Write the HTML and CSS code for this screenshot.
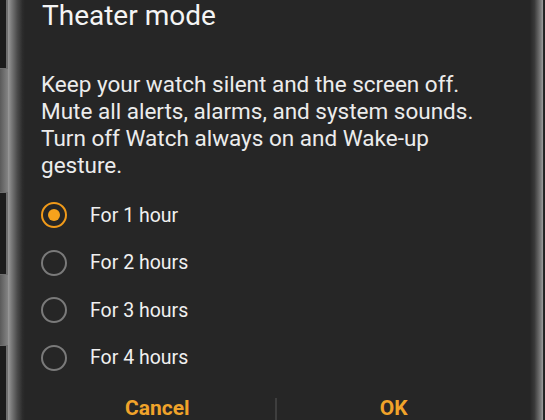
FILE: index.html
```html
<!DOCTYPE html>
<html lang="en">
<head>
<meta charset="utf-8">
<title>Theater mode</title>
<link rel="stylesheet" href="styles.css">
</head>
<body>
<div class="phone">
  <div class="side">
    <div class="seg dark s1"></div>
    <div class="seg grey s2"></div>
    <div class="seg dark s3"></div>
    <div class="seg grey s4"></div>
    <div class="seg dark s5"></div>
  </div>
  <div class="bezel-left"></div>
  <div class="screen">
    <h1 class="title">Theater mode</h1>
    <p class="desc">Keep your watch silent and the screen off.<br>Mute all alerts, alarms, and system sounds.<br>Turn off Watch always on and Wake-up gesture.</p>
    <ul class="options">
      <li class="option selected"><span class="radio"><span class="dot"></span></span><span class="label">For 1 hour</span></li>
      <li class="option"><span class="radio"></span><span class="label">For 2 hours</span></li>
      <li class="option"><span class="radio"></span><span class="label">For 3 hours</span></li>
      <li class="option"><span class="radio"></span><span class="label">For 4 hours</span></li>
    </ul>
    <div class="actions">
      <button class="btn">Cancel</button>
      <span class="divider"></span>
      <button class="btn">OK</button>
    </div>
  </div>
  <div class="bezel-right"></div>
</div>
</body>
</html>
```

FILE: styles.css
```css
html, body {
  margin: 0;
  padding: 0;
  background: #262626;
  overflow: hidden;
}
body {
  width: 545px;
  height: 420px;
  font-family: Roboto, "Noto Sans", Arial, sans-serif;
}
.phone {
  display: flex;
  width: 545px;
  height: 420px;
  overflow: hidden;
}
.side {
  width: 8px;
  display: flex;
  flex-direction: column;
  flex-shrink: 0;
}
.seg { box-sizing: border-box; }
.seg.dark {
  background: #1c1c1c;
  border-right: 2px solid #6e6e6e;
  border-top: 1px solid #6e6e6e;
  border-bottom: 1px solid #6e6e6e;
}
.seg.grey {
  background: linear-gradient(to right, #5a5a5a, #848484);
}
.s1 { height: 69px; border-top: none !important; }
.s2 { height: 123px; }
.s3 { height: 83px; }
.s4 { height: 70px; }
.s5 { flex: 1; border-bottom: none !important; }
.bezel-left {
  width: 17px;
  flex-shrink: 0;
  background: linear-gradient(to right, #9a9a9a 0%, #7a7a7a 20%, #4a4a4a 55%, #2c2c2c 85%, #262626 100%);
}
.bezel-right {
  width: 15px;
  flex-shrink: 0;
  background: linear-gradient(to right, #262626 0%, #3a3a3a 30%, #7a7a7a 70%, #9c9c9c 86%, #2a2a2a 88%, #1e1e1e 100%);
}
.screen {
  flex: 1;
  background: #262626;
  padding: 0 12px 0 16px;
  display: flex;
  flex-direction: column;
  color: #f0f0f0;
}
.title {
  margin: -0.5px 0 0 0;
  font-size: 28px;
  font-weight: 400;
  line-height: 32px;
  color: #f4f4f4;
  padding-left: 1px;
}
.desc {
  margin: 39.5px 0 0 0;
  max-width: 445px;
  font-size: 22.5px;
  line-height: 27px;
  color: #ececec;
}
.options {
  list-style: none;
  margin: 12.5px 0 0 0;
  padding: 0;
}
.option {
  height: 47.5px;
  display: flex;
  align-items: center;
  gap: 23px;
}
.radio {
  width: 26px;
  height: 26px;
  box-sizing: border-box;
  border: 2px solid #7a7a7a;
  border-radius: 50%;
  display: flex;
  align-items: center;
  justify-content: center;
  flex-shrink: 0;
}
.option.selected .radio {
  border-color: #f09a1a;
}
.dot {
  width: 12px;
  height: 12px;
  border-radius: 50%;
  background: #f7a21c;
}
.label {
  font-size: 19.5px;
  color: #f0f0f0;
}
.actions {
  margin: 14.5px 7px 0 -1px;
  display: flex;
  align-items: flex-start;
}
.btn {
  flex: 1;
  background: none;
  border: none;
  font-family: Roboto, "Noto Sans", Arial, sans-serif;
  font-weight: 700;
  font-size: 21px;
  color: #f0a32a;
  padding: 0;
  line-height: 24px;
}
.divider {
  width: 2px;
  height: 30px;
  background: #3e3e3e;
  margin-top: 2px;
}
```
